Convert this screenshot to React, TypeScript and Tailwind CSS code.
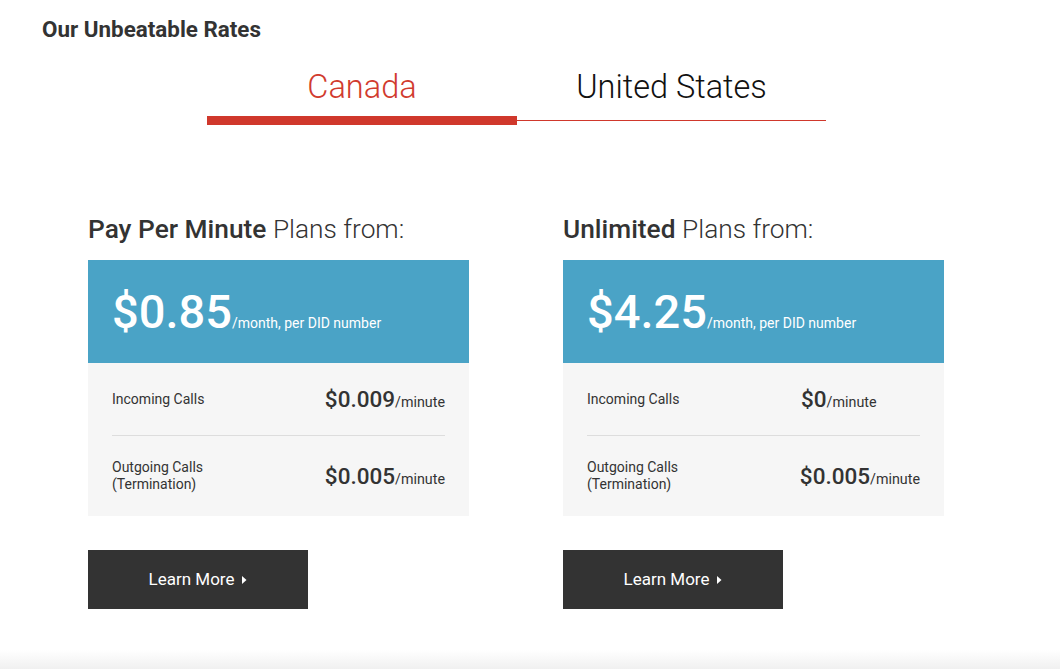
import React from "react";

type Row = { label: string[]; price: string };
type Plan = { bold: string; price: string; rows: Row[] };

const plans: Plan[] = [
  {
    bold: "Pay Per Minute",
    price: "$0.85",
    rows: [
      { label: ["Incoming Calls"], price: "$0.009" },
      { label: ["Outgoing Calls", "(Termination)"], price: "$0.005" },
    ],
  },
  {
    bold: "Unlimited",
    price: "$4.25",
    rows: [
      { label: ["Incoming Calls"], price: "$0" },
      { label: ["Outgoing Calls", "(Termination)"], price: "$0.005" },
    ],
  },
];

function Card({ plan }: { plan: Plan }) {
  return (
    <div className="w-[381px] flex flex-col">
      <h2 className="text-[26.3px] leading-[30px] text-[#333333] -mt-px">
        <span className="font-medium">{plan.bold}</span>{" "}
        <span className="font-light">Plans from:</span>
      </h2>
      <div className="mt-[16px] h-[103px] bg-[#4aa3c6] flex items-center pl-[24px] text-white">
        <div className="flex items-baseline">
          <span className="text-[47px] leading-[46px] font-medium">{plan.price}</span>
          <span className="text-[14px] leading-[18px]">/month, per DID number</span>
        </div>
      </div>
      <div className="bg-[#f6f6f6] px-[24px]">
        {plan.rows.map((r, i) => (
          <div
            key={i}
            className={
              i === 0
                ? "h-[73px] flex items-center border-b border-[#dddddd]"
                : "h-[80px] flex items-center"
            }
          >
            <div className="w-[214px] text-[14px] leading-[17px] text-[#333333]">
              {r.label.map((l, j) => (
                <div key={j}>{l}</div>
              ))}
            </div>
            <div className="flex items-baseline text-[#333333]">
              <span className="text-[22.5px] leading-[26px] font-medium">{r.price}</span>
              <span className="text-[14.3px] leading-[18px]">/minute</span>
            </div>
          </div>
        ))}
      </div>
      <button className="mt-[34px] w-[220px] h-[59px] bg-[#333333] text-white text-[17px] font-normal flex items-center justify-center gap-[8px]">
        <span>Learn More</span>
        <svg width="5" height="8" viewBox="0 0 5 8" className="mt-[1px]">
          <path d="M0 0 L4.5 4 L0 8 Z" fill="white" />
        </svg>
      </button>
    </div>
  );
}

export default function App() {
  return (
    <div className="w-[1060px] h-[669px] bg-white font-['Roboto',sans-serif] flex flex-col overflow-hidden">
      <div className="pt-[16px] pl-[42px]">
        <h1 className="text-[22.4px] leading-[26px] font-bold text-[#333333]">Our Unbeatable Rates</h1>
      </div>
      <div className="mt-[26px] ml-[207px] w-[619px] flex flex-col">
        <div className="flex">
          <div className="w-[310px] text-center text-[32.5px] leading-[38px] font-light text-[#d13b2e]">Canada</div>
          <div className="w-[309px] text-center text-[32.5px] leading-[38px] font-light text-[#111111]">United States</div>
        </div>
        <div className="mt-[10px] flex items-center h-[9px]">
          <div className="w-[310px] h-[9px] bg-[#d0382c]"></div>
          <div className="w-[309px] h-px bg-[#d0382c]"></div>
        </div>
      </div>
      <div className="mt-[90px] ml-[88px] flex gap-[94px]">
        {plans.map((p, i) => (
          <Card key={i} plan={p} />
        ))}
      </div>
      <div className="flex-1"></div>
      <div className="h-[19px] bg-gradient-to-b from-white to-[#f0f0f0]"></div>
    </div>
  );
}
